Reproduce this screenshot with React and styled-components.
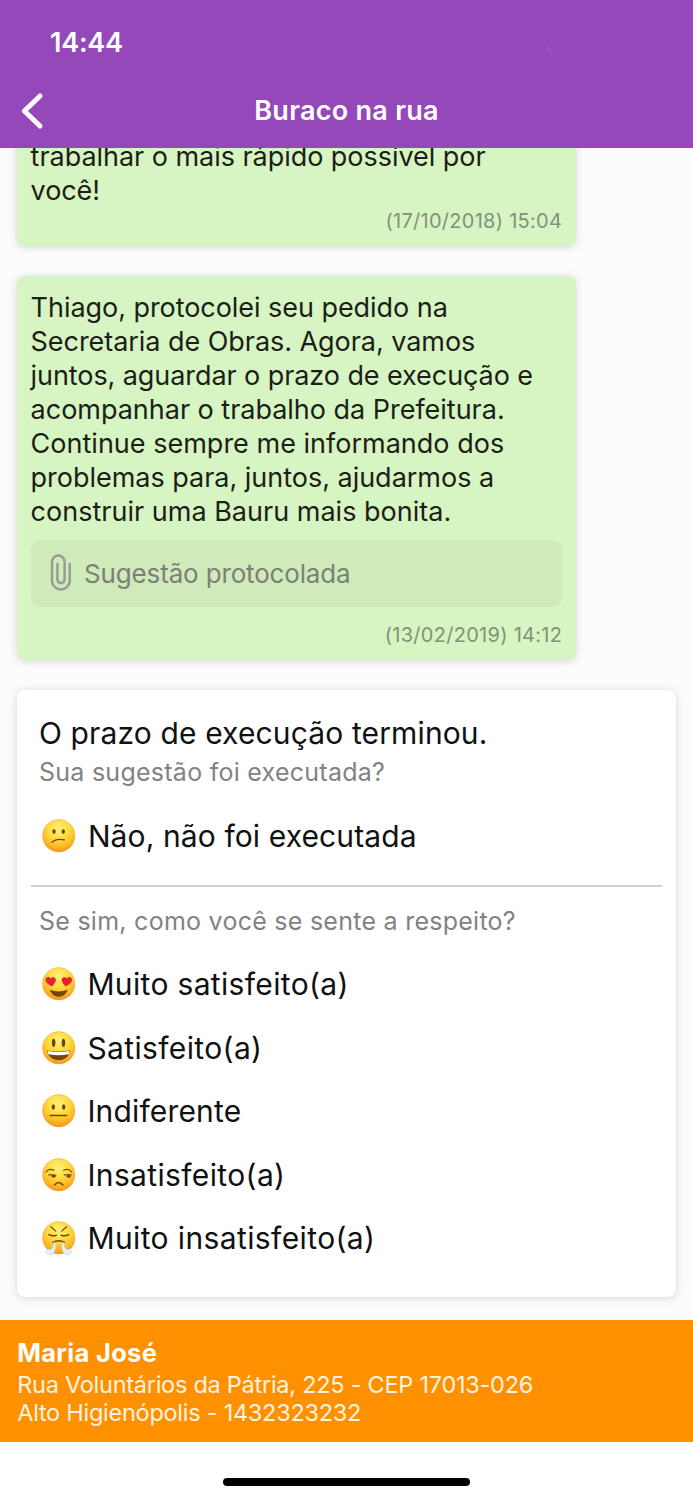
import React from 'react'
import styled, { createGlobalStyle } from 'styled-components'

const GlobalStyle = createGlobalStyle`
  * {
    box-sizing: border-box;
  }

  body {
    margin: 0;
    background-color: #fff;
    font-family: Inter, 'Liberation Sans', sans-serif;
  }

  p, h1, h2, ul {
    margin: 0;
    padding: 0;
    font-weight: 400;
    list-style: none;
  }
`

const Screen = styled.div`
  width: 693px;
  height: 1500px;
  display: flex;
  flex-direction: column;
  overflow: hidden;
  background-color: #fff;
`

const Header = styled.header`
  flex: none;
  height: 148px;
  background-color: #9448ba;
  color: #fff;
  font-size: 27px;
  font-weight: 600;
`

const StatusBar = styled.div`
  height: 75px;
  padding: 10px 141px 0 50px;
  display: flex;
  align-items: center;
  justify-content: space-between;
  letter-spacing: -0.25px;
`

const Dot = styled.span`
  width: 6px;
  height: 6px;
  margin-top: 13px;
  border-radius: 50%;
  background-color: #9a50c0;
`

const NavBar = styled.div`
  height: 71px;
  display: grid;
  grid-template-columns: 80px 1fr 80px;
  align-items: center;

  svg {
    display: block;
    margin-left: 20px;
  }

  h1 {
    font-size: 27px;
    font-weight: 600;
    line-height: 71px;
    letter-spacing: 0.28px;
    text-align: center;
  }
`

const Chat = styled.main`
  flex: none;
  height: 1172px;
  padding: 0 16.6px;
  display: flex;
  flex-direction: column;
  overflow: hidden;
  background-color: #fcfcfc;
`

const Bubble = styled.section`
  flex: none;
  width: 559.6px;
  height: ${p => p.$height}px;
  margin-top: ${p => p.$top || 0}px;
  padding: 15.8px 14px 0;
  display: flex;
  flex-direction: column;
  border-radius: 8px;
  background-color: #d7f4c3;
  box-shadow: 0 1px 9px rgba(0, 0, 0, 0.16);
`

const Line = styled.p`
  font-size: 27px;
  line-height: 33.9px;
  letter-spacing: ${p => p.$ls || 0}px;
  white-space: nowrap;
  color: #1b1f18;
`

const Attachment = styled.div`
  height: 67px;
  margin-top: 11px;
  padding-left: 19px;
  display: flex;
  align-items: center;
  border-radius: 9px;
  background-color: #d0eaba;
  color: #7b8178;
  font-size: 26px;
  letter-spacing: -0.16px;

  svg {
    flex: none;
    margin-right: 12.5px;
  }
`

const Stamp = styled.time`
  margin-top: ${p => p.$top}px;
  font-size: 20px;
  line-height: 24px;
  letter-spacing: 0.28px;
  text-align: right;
  color: #83917b;
`

const Card = styled.section`
  flex: none;
  height: 607px;
  margin-top: 29.5px;
  padding: 25px 14px 0;
  border-radius: 8px;
  background-color: #fff;
  box-shadow: 0 1px 9px rgba(0, 0, 0, 0.16);
`

const Title = styled.h2`
  padding-left: 8.4px;
  font-size: 30px;
  line-height: 36px;
  letter-spacing: 0.13px;
  color: #111;
`

const Question = styled.p`
  padding-left: 8.4px;
  font-size: 25px;
  line-height: 42px;
  letter-spacing: 0.26px;
  color: #828282;
`

const Option = styled.li`
  height: 63.5px;
  padding-left: 11.3px;
  display: flex;
  align-items: center;
  font-size: 30px;
  letter-spacing: ${p => p.$ls}px;
  white-space: nowrap;
  color: #111;

  svg {
    flex: none;
    margin-right: ${p => p.$gap || 12}px;
  }
`

const Single = styled.ul`
  margin-top: 12px;
`

const Divider = styled.hr`
  height: 2px;
  margin: 17px 0 12.5px;
  border: 0;
  background-color: #cfcfcf;
`

const Options = styled.ul`
  margin-top: 11px;
`

const Footer = styled.footer`
  flex: none;
  height: 122px;
  padding: 14.5px 17.2px 0;
  background-color: #ff9000;
  color: #fff3e3;
  font-size: 23.5px;
  line-height: 28px;
  letter-spacing: -0.26px;

  strong {
    display: block;
    margin-bottom: 1px;
    font-size: 25.5px;
    font-weight: 700;
    line-height: 35px;
    letter-spacing: 0.31px;
    color: #fff;
  }
`

const HomeBar = styled.div`
  width: 247px;
  height: 8px;
  margin: 36px auto 0;
  border-radius: 4px;
  background-color: #000;
`

const ink = '#70450f'

const faces = {
  confused: (
    <>
      <ellipse cx="12.2" cy="12.8" rx="1.7" ry="2.4" fill={ink} stroke="none" />
      <ellipse cx="21.6" cy="12.8" rx="1.7" ry="2.4" fill={ink} stroke="none" />
      <path d="M10.3 23.6C13 20.6 17.6 20 22.8 21.2" />
    </>
  ),
  love: (
    <>
      <path d="M8 23.2Q17 26.4 26 23.2C24.6 28 21 30.3 17 30.3S9.4 28 8 23.2Z" fill={ink} stroke="none" />
      <path d="M9.9 19.8C6 17.6 3.4 15.4 3.5 12.7C3.7 9.9 7.2 9.2 8.7 11.7C10.7 9.3 14.2 10.6 14 13.2C13.8 15.7 12 17.9 9.9 19.8Z" fill="#e8202e" stroke="none" />
      <path d="M24.1 19.8C28 17.6 30.6 15.4 30.5 12.7C30.3 9.9 26.8 9.2 25.3 11.7C23.3 9.3 19.8 10.6 20 13.2C20.2 15.7 22 17.9 24.1 19.8Z" fill="#e8202e" stroke="none" />
    </>
  ),
  happy: (
    <>
      <ellipse cx="11.8" cy="12" rx="1.8" ry="4.2" fill={ink} stroke="none" />
      <ellipse cx="21.8" cy="12" rx="1.8" ry="4.2" fill={ink} stroke="none" />
      <path d="M5.2 19.8Q17 22 28.4 19.8C27.6 26 23 29.6 17 29.6S6 26 5.2 19.8Z" fill={ink} stroke="none" />
      <path d="M5.8 20.3Q17 22.3 27.9 20.3Q27.9 22.4 27 23.6Q17 25.4 6.7 23.6Q5.8 22.2 5.8 20.3Z" fill="#fff" stroke="none" />
    </>
  ),
  neutral: (
    <>
      <ellipse cx="11.5" cy="13.2" rx="1.7" ry="2.8" fill={ink} stroke="none" />
      <ellipse cx="22" cy="13.2" rx="1.7" ry="2.8" fill={ink} stroke="none" />
      <path d="M8.3 21.8H25" strokeWidth="1.5" />
    </>
  ),
  unamused: (
    <>
      <path d="M4 14.2Q7 9.9 12 12.5M30 14.2Q27 9.9 22 12.5" />
      <path d="M7 17.2Q10.5 16.8 14.2 17.5M22.6 17.2Q26 16.8 29.6 17.2" />
      <ellipse cx="11.8" cy="18.5" rx="2" ry="1.5" fill={ink} stroke="none" />
      <ellipse cx="27" cy="18.5" rx="2" ry="1.5" fill={ink} stroke="none" />
      <path d="M12.7 27.3Q17 22.2 21.3 27.3" strokeWidth="1.5" />
    </>
  ),
  steam: (
    <>
      <path d="M9 5.8L14 10.3M25 5.8L20 10.3" />
      <path d="M7 13.8Q10.5 15.8 14.5 14.4M27 13.8Q23.5 15.8 19.5 14.4" strokeWidth="1.5" />
      <path d="M11 21.6Q17 18.3 23 21.6" strokeWidth="1.5" />
      <path d="M13.7 22C14.3 26 13.8 30 11.5 33.4C8 35.3 3.6 34 4 31C4.2 28.8 7 28 8.5 29C10.8 27.8 11.9 25.3 11.4 22Z" fill="#e6edf8" stroke="#bccbe2" strokeWidth=".5" />
      <path d="M20.3 22C19.7 26 20.2 30 22.5 33.4C26 35.3 30.4 34 30 31C29.8 28.8 27 28 25.5 29C23.2 27.8 22.1 25.3 22.6 22Z" fill="#e6edf8" stroke="#bccbe2" strokeWidth=".5" />
    </>
  ),
}

const Face = ({ name }) => (
  <svg width="33.5" height="34.5" viewBox="0 0 34 35" fill="none" stroke={ink} strokeWidth="1.2" strokeLinecap="round">
    <defs>
      <radialGradient id={`skin-${name}`} cx=".5" cy=".28" r=".72">
        <stop offset="0" stopColor="#fff07a" />
        <stop offset=".45" stopColor="#ffdc3e" />
        <stop offset=".8" stopColor="#fdb522" />
        <stop offset="1" stopColor="#f3901c" />
      </radialGradient>
    </defs>
    <circle cx="17" cy="17" r="16.5" fill={`url(#skin-${name})`} stroke="#f2a24a" strokeWidth=".5" />
    {faces[name]}
  </svg>
)

const reply = [
  ['Thiago, protocolei seu pedido na', -0.05],
  ['Secretaria de Obras. Agora, vamos', -0.05],
  ['juntos, aguardar o prazo de execução e', -0.08],
  ['acompanhar o trabalho da Prefeitura.', -0.02],
  ['Continue sempre me informando dos', 0.01],
  ['problemas para, juntos, ajudarmos a', -0.02],
  ['construir uma Bauru mais bonita.', 0.01],
]

const options = [
  ['love', 'Muito satisfeito(a)', 0.34],
  ['happy', 'Satisfeito(a)', 0.37],
  ['neutral', 'Indiferente', 0.16],
  ['unamused', 'Insatisfeito(a)', 0.36],
  ['steam', 'Muito insatisfeito(a)', 0.39],
]

const App = () => {
  return (
    <>
      <GlobalStyle />
      <Screen>
        <Header>
          <StatusBar>
            14:44
            <Dot />
          </StatusBar>
          <NavBar>
            <svg width="24" height="38" viewBox="0 0 24 38" fill="none" stroke="#fff" strokeWidth="5" strokeLinecap="round" strokeLinejoin="round">
              <path d="M20 4L4.4 19L20 34" />
            </svg>
            <h1>Buraco na rua</h1>
          </NavBar>
        </Header>

        <Chat>
          {/* a primeira mensagem fica cortada pela rolagem */}
          <Bubble $height={122} $top={-24}>
            <Line $ls={-0.04}>trabalhar o mais rápido possível por</Line>
            <Line $ls={-0.1}>você!</Line>
            <Stamp $top={1.5}>(17/10/2018) 15:04</Stamp>
          </Bubble>

          <Bubble $height={384.5} $top={29.5}>
            {reply.map(([text, ls]) => <Line key={text} $ls={ls}>{text}</Line>)}
            <Attachment>
              <svg width="22" height="40" viewBox="0 0 22 40" fill="none" stroke="#969e94" strokeWidth="2.5" strokeLinecap="round">
                <path d="M19.7 11V28.5A8.9 8.9 0 0 1 2 28.5V8.8A6.3 6.3 0 0 1 14.6 8.8V26.5A3.6 3.6 0 0 1 7.4 26.5V11" />
              </svg>
              Sugestão protocolada
            </Attachment>
            <Stamp $top={16.5}>(13/02/2019) 14:12</Stamp>
          </Bubble>

          <Card>
            <Title>O prazo de execução terminou.</Title>
            <Question>Sua sugestão foi executada?</Question>
            <Single>
              <Option $ls={0.11} $gap={12.5}><Face name="confused" />Não, não foi executada</Option>
            </Single>
            <Divider />
            <Question>Se sim, como você se sente a respeito?</Question>
            <Options>
              {options.map(([face, text, ls]) => (
                <Option key={face} $ls={ls}><Face name={face} />{text}</Option>
              ))}
            </Options>
          </Card>
        </Chat>

        <Footer>
          <strong>Maria José</strong>
          <p>Rua Voluntários da Pátria, 225 - CEP 17013-026</p>
          <p>Alto Higienópolis - 1432323232</p>
        </Footer>
        <HomeBar />
      </Screen>
    </>
  )
}

export default App
